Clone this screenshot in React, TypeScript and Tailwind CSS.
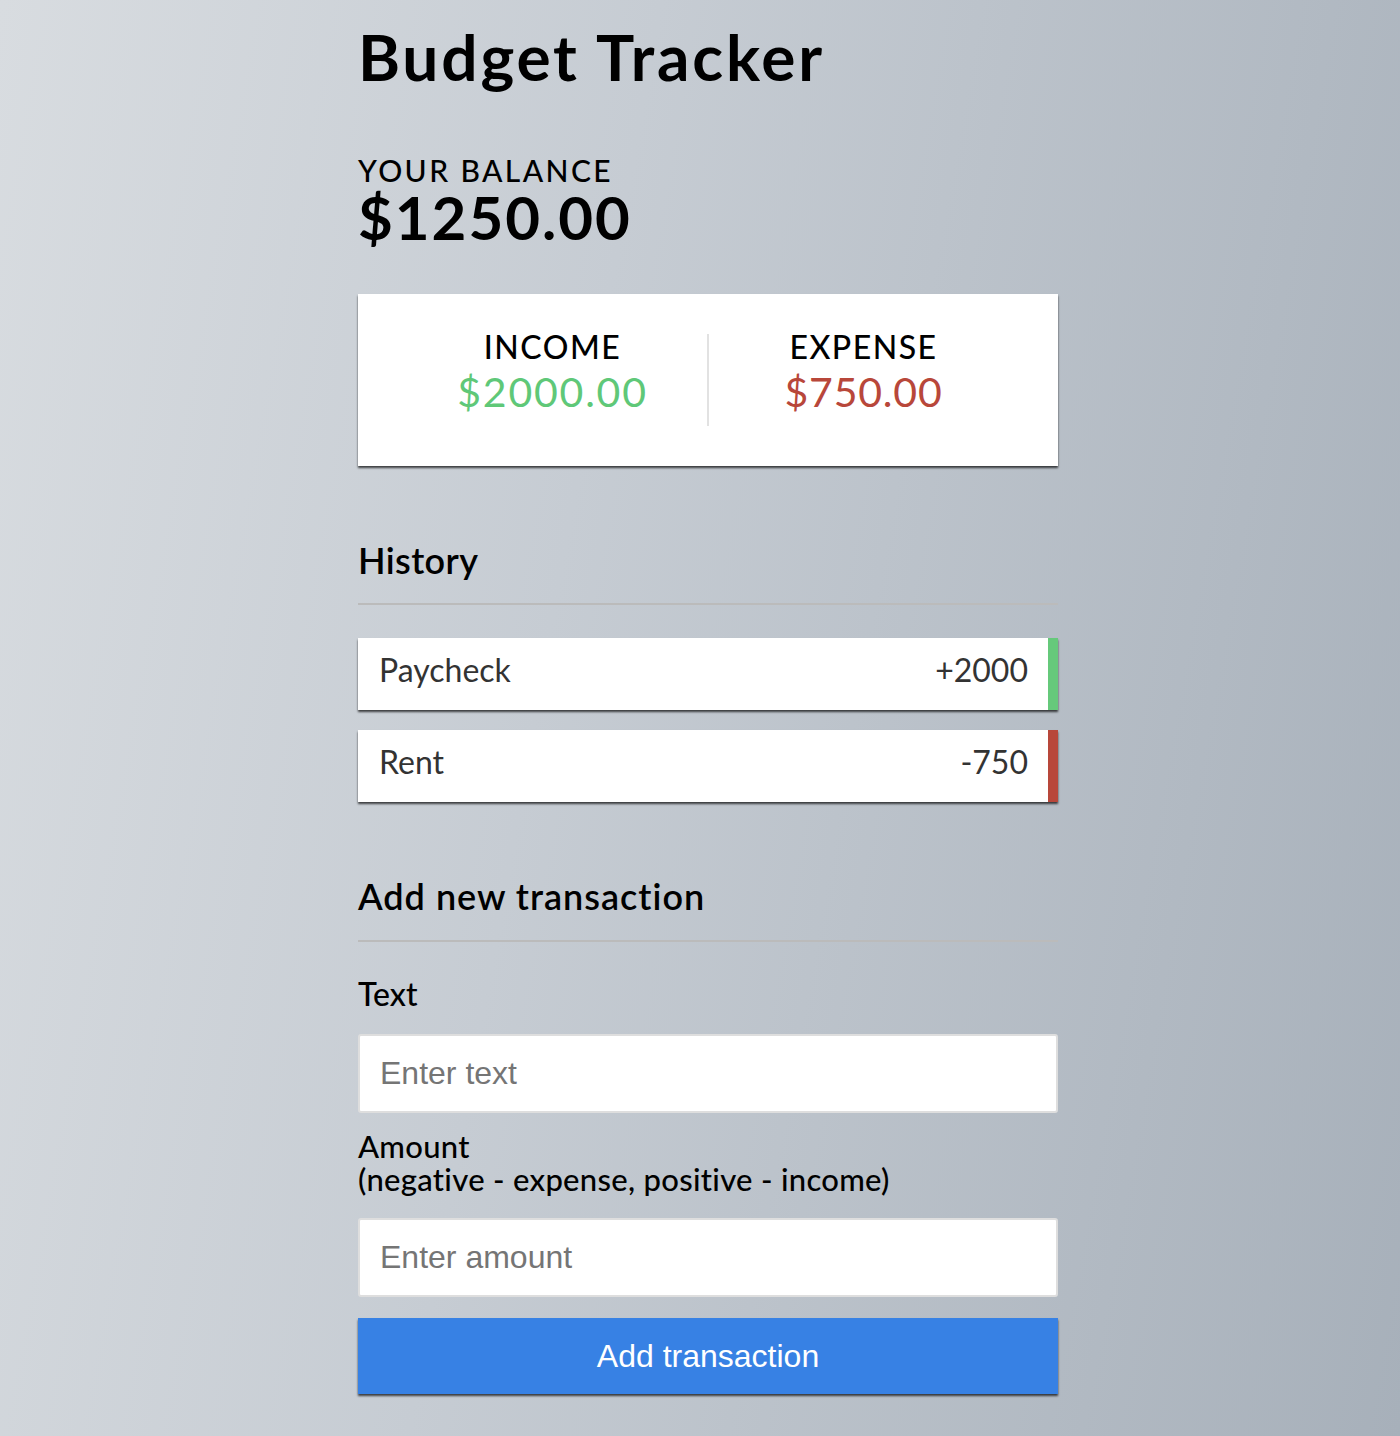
import React from 'react';

interface Transaction {
  id: number;
  text: string;
  amount: number;
}

const transactions: Transaction[] = [
  { id: 1, text: 'Paycheck', amount: 2000 },
  { id: 2, text: 'Rent', amount: -750 }
];

const App: React.FC = () => {
  const income = transactions.filter(t => t.amount > 0).reduce((a, t) => a + t.amount, 0);
  const expense = transactions.filter(t => t.amount < 0).reduce((a, t) => a - t.amount, 0);
  const balance = income - expense;

  return (
    <div className="min-h-screen flex justify-center pl-[16px] bg-[linear-gradient(100deg,#d8dce0_0%,#c6ccd3_40%,#a7b0ba_100%)] font-['Lato',sans-serif] text-black">
      <div className="w-[700px] pt-[25px]">
        <h1 className="text-[64px] leading-none font-bold tracking-[2.8px] h-[66px]">Budget Tracker</h1>

        <h4 className="mt-[64px] h-[30px] text-[30px] leading-[30px] font-medium tracking-[2.4px]">YOUR BALANCE</h4>
        <h1 className="mt-[2px] text-[60px] leading-[60px] font-bold tracking-[2px]">${balance.toFixed(2)}</h1>

        <div className="mt-[47px] h-[172px] bg-white flex items-start pt-[37px] px-[40px] shadow-[0_2px_2px_rgba(0,0,0,0.7)]">
          <div className="flex-1 text-center">
            <h4 className="text-[32px] leading-none font-medium tracking-[1.5px]">INCOME</h4>
            <p className="mt-[8px] text-[41px] leading-none text-[#5fc878] tracking-[1.8px]">${income.toFixed(2)}</p>
          </div>
          <div className="w-[2px] h-[92px] mt-[3px] bg-[#e2e2e2]" />
          <div className="flex-1 text-center">
            <h4 className="text-[32px] leading-none font-medium tracking-[1.5px]">EXPENSE</h4>
            <p className="mt-[8px] text-[41px] leading-none text-[#b8473a] tracking-[0.8px]">${expense.toFixed(2)}</p>
          </div>
        </div>

        <h3 className="mt-[76px] text-[36px] leading-none font-semibold tracking-[0.4px] pb-[25px] border-b-2 border-[#bbbbbb]">History</h3>

        <ul className="mt-[33px] flex flex-col gap-[20px]">
          {transactions.map(t => (
            <li
              key={t.id}
              className={`h-[72px] bg-white flex justify-between items-start pt-[16px] pl-[21px] pr-[20px] border-r-[10px] text-[32px] leading-none text-[#333333] shadow-[0_2px_2px_rgba(0,0,0,0.7)] ${
                t.amount < 0 ? 'border-[#b8473a]' : 'border-[#66c97b]'
              }`}
            >
              <span>{t.text}</span>
              <span>{t.amount < 0 ? '-' : '+'}{Math.abs(t.amount)}</span>
            </li>
          ))}
        </ul>

        <h3 className="mt-[76px] text-[36px] leading-none font-semibold tracking-[1px] pb-[26px] border-b-2 border-[#bbbbbb]">Add new transaction</h3>

        <form className="flex flex-col" onSubmit={e => e.preventDefault()}>
          <label className="mt-[36px] text-[32px] leading-none font-medium">Text</label>
          <input
            type="text"
            placeholder="Enter text"
            className="mt-[24px] h-[79px] w-full bg-white border-2 border-[#dedede] rounded-[3px] px-[20px] text-[32px] font-['Liberation_Sans',Arial,sans-serif] placeholder:text-[#757575] outline-none"
          />
          <label className="mt-[17px] text-[31px] leading-[33px] font-medium tracking-[0.3px]">
            <span className="block">Amount</span>
            <span className="block">(negative - expense, positive - income)</span>
          </label>
          <input
            type="number"
            placeholder="Enter amount"
            className="mt-[22px] h-[79px] w-full bg-white border-2 border-[#dedede] rounded-[3px] px-[20px] text-[32px] font-['Liberation_Sans',Arial,sans-serif] placeholder:text-[#757575] outline-none"
          />
          <button
            type="submit"
            className="mt-[21px] h-[76px] w-full bg-[#3781e4] text-white text-[32px] font-['Liberation_Sans',Arial,sans-serif] shadow-[0_2px_2px_rgba(0,0,0,0.7)]"
          >
            Add transaction
          </button>
        </form>
      </div>
    </div>
  );
};

export default App;
